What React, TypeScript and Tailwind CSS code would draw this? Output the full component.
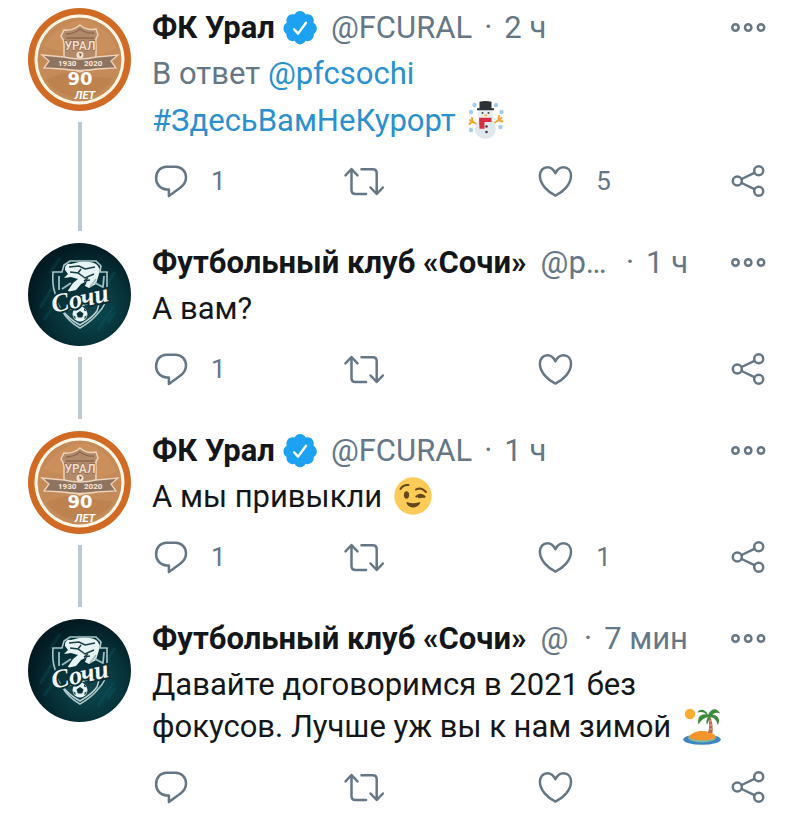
import type { ReactNode } from "react";

type Tweet = {
  id: number;
  club: "ural" | "sochi";
  handle: string;
  handleCut?: boolean;
  time: string;
  replyTo?: string;
  body: ReactNode;
  replies?: number;
  likes?: number;
};

const tweets: Tweet[] = [
  {
    id: 1,
    club: "ural",
    handle: "@FCURAL",
    time: "2 ч",
    replyTo: "@pfcsochi",
    body: (
      <>
        <a href="#hashtag" className="text-[#2a90d0]">
          #ЗдесьВамНеКурорт
        </a>{" "}
        <Snowman />
      </>
    ),
    replies: 1,
    likes: 5,
  },
  { id: 2, club: "sochi", handle: "@p…", handleCut: true, time: "1 ч", body: "А вам?", replies: 1 },
  {
    id: 3,
    club: "ural",
    handle: "@FCURAL",
    time: "1 ч",
    body: (
      <>
        А мы привыкли <Wink />
      </>
    ),
    replies: 1,
    likes: 1,
  },
  {
    id: 4,
    club: "sochi",
    handle: "@",
    handleCut: true,
    time: "7 мин",
    body: (
      <>
        Давайте договоримся в 2021 без фокусов. Лучше уж вы к нам зимой <Island />
      </>
    ),
  },
];

const emojiClass = "ml-1 inline-block size-[38px] align-[-8px]";

function Snowman() {
  return (
    <svg viewBox="-1 0 37 38" className={emojiClass} role="img" aria-label="Снеговик">
      <g fill="#a3cdf0">
        <circle cx="6" cy="4" r="2.2" />
        <circle cx="2.5" cy="11" r="2.2" />
        <circle cx="2.5" cy="29" r="2.2" />
        <circle cx="27.5" cy="4" r="2.2" />
        <circle cx="33" cy="11" r="2.2" />
        <circle cx="32" cy="26" r="2.2" />
      </g>
      <path d="M8 23L1.5 19M4 20.5l-.5-3.5M3.5 20.5L1 23M26.5 21.5L33 17M30 19l.5-4M30 19l4 1.5" stroke="#f4a72f" strokeWidth="2" strokeLinecap="round" fill="none" />
      <circle cx="17" cy="27.5" r="10.5" fill="#e1e8ed" />
      <circle cx="17" cy="13" r="7.5" fill="#e8edf0" />
      <path d="M10.5 16.7h12.5v4.3h-7v6.7h-5z" fill="#d92d45" />
      <path d="M11 .8q6-1.6 12 0v6.4h2.5v2H8.5v-2H11z" fill="#2b3137" />
      <circle cx="14" cy="12" r="1" fill="#3a3f44" />
      <circle cx="20" cy="12" r="1" fill="#3a3f44" />
      <path d="M16 14.3h2.5" stroke="#f4a72f" strokeWidth="1.4" />
      <circle cx="18" cy="25.5" r="1.3" fill="#3a3f44" />
      <circle cx="18" cy="31" r="1.3" fill="#3a3f44" />
    </svg>
  );
}

function Wink() {
  return (
    <svg viewBox="0 0 38 38" className={emojiClass} role="img" aria-label="Подмигивание">
      <circle cx="19" cy="19" r="18.7" fill="#fdcb58" />
      <ellipse cx="12.5" cy="18" rx="2.6" ry="3.7" fill="#65471b" />
      <g fill="none" stroke="#65471b" strokeLinecap="round">
        <path d="M6.5 12q2.5-4.5 8-4M22 12.5q5-3 10 2.5" strokeWidth="2" />
        <path d="M22.5 19.5q4.5-3.5 8.5.5q-3-1-6 .2" strokeWidth="2.2" />
      </g>
      <path d="M13.5 25.2q5.5 2 11.5 0c1.2-.4 1.5.5.8 1.5c-3 5-10.5 5-13 0c-.5-1.1-.3-1.9.7-1.5z" fill="#65471b" />
    </svg>
  );
}

function Island() {
  return (
    <svg viewBox="0 0 38 38" className={emojiClass} role="img" aria-label="Остров">
      <circle cx="7" cy="7" r="5.2" fill="#ffac33" />
      <ellipse cx="19" cy="32.5" rx="18.8" ry="5.3" fill="#3f86c0" />
      <ellipse cx="19" cy="30.8" rx="14" ry="4.7" fill="#77b9a8" />
      <path d="M6 30.5c1-4 7-6.5 13-6.5s13 2 14 6.5c-5 3.8-22 3.8-27 0z" fill="#f4962b" />
      <path d="M24.5 9q3 9 .5 17h4.5Q30.5 17 27 9z" fill="#c1694f" />
      <path d="M26 14h2.5M26.5 18h3M26.5 22h3" stroke="#e6b39c" strokeWidth="1.2" />
      <path d="M25 8C22 1 16 2 14.5 5.5C19 4 22 6 23.5 7.5C17 6.5 14 11 15.5 17.5C18 13 21 11 25 10C23 13 23 16 24 18C25 14 27 12 27.5 10C32 11 34 14 34.5 18C38 13 35 8 29.5 7.5C32 5 35 5.5 37 6.5C35 1 28 0 25 8z" fill="#3e8a3c" />
    </svg>
  );
}

function UralLogo() {
  return (
    <svg viewBox="0 0 103 103" className="size-[103px]" role="img" aria-label="ФК Урал">
      <circle cx="51.5" cy="51.5" r="51.5" fill="#d06a24" />
      <circle cx="51.5" cy="51.5" r="45" fill="#fff6e6" />
      <circle cx="51.5" cy="51.5" r="42" fill="#c48a58" />
      <path d="M15 38q18-25 42-26q20 5 32 28q-15 9-35 7t-39-9z" fill="#d0935d" opacity=".55" />
      <path d="M18 72q20-10 36-6t31 4q-8 14-24 19q-27 3-43-17z" fill="#b87944" opacity=".5" />
      <path d="M36 22q9 1 16-5q7 6 16 4l2 6q-3 4-2 9v11q-1 12-16 17q-15-5-16-17V36q0-4-3-8z" fill="#b28a6a" stroke="#ecd3b9" strokeWidth="1.5" />
      <path d="M38 26q8 0 14-5q7 5 14 4M38 30h28" fill="none" stroke="#8b6850" strokeWidth="1.3" />
      <text x="52" y="42" textAnchor="middle" fontSize="12" stroke="#7b5a45" strokeWidth="1" paintOrder="stroke" className="fill-[#f0dcc5] font-bold">УРАЛ</text>
      <path d="M14 47l22 2q16 4 32 0l22-2l-7 6l5 7l-19 1q-17 3-34 0l-19-1l5-7z" fill="#8f7361" stroke="#ecd3b9" strokeWidth="1.3" />
      <text x="30" y="58" fontSize="8" className="fill-[#fbe8d3] font-bold">1930</text>
      <text x="56" y="58" fontSize="8" className="fill-[#fbe8d3] font-bold">2020</text>
      <circle cx="52" cy="47" r="3.5" fill="#f3e2cd" />
      <path d="M51 45l3 1l-2 3z" fill="#765b48" />
      <text x="52" y="77" textAnchor="middle" fontSize="18" className="fill-white font-['DejaVu_Sans',sans-serif] font-bold">90</text>
      <text x="57" y="91" textAnchor="middle" fontSize="11" className="fill-white font-bold italic">ЛЕТ</text>
    </svg>
  );
}

function SochiLogo() {
  return (
    <svg viewBox="0 0 103 103" className="size-[103px]" role="img" aria-label="ФК Сочи">
      <defs>
        <radialGradient id="sea" cx=".6" cy=".62" r=".6">
          <stop offset="0" stopColor="#0b4e55" />
          <stop offset=".55" stopColor="#07343b" />
          <stop offset="1" stopColor="#031a22" />
        </radialGradient>
      </defs>
      <circle cx="51.5" cy="51.5" r="51.5" fill="url(#sea)" />
      <path d="M12 65l12-20M16 77l10-15M70 87l15-23M79 80l8-11M22 30l10-15M78 43l9-14" stroke="#11656b" strokeWidth="3" opacity=".25" />
      {/* shield */}
      <path d="M28 29h6l2-7l6-4h26l5 5l-1 6h7v22q-1 11-8 18q-7 9-19 16q-12-7-17-16q-7-9-8-19q-3-8-2-21z" fill="#08323a" stroke="#a9c6c9" strokeWidth="1.6" />
      {/* bear */}
      <path d="M37 25q1-5 6-4l8-2q12-1 17 2q5 4 3 10l-3 10l-7 4l-4-2l2-5l-6 3l-5 6l-9 2l6-9l5-4l-7-2l-7 1l4-4l-3-4z" fill="#e8f3f3" />
      <path d="M41 24l10-1l6 3l10-2M42 29l8 1l7 5l9-4M53 26l-3 4M60 35l-4 3l6-1" fill="none" stroke="#163e45" strokeWidth="1.5" />
      <path d="M31 33v14M34 46l9-6M76 33l-1 11l-8-4M62 44l6-8" fill="none" stroke="#9dbfc2" strokeWidth="1.8" />
      {/* lower field with the ball */}
      <path d="M35 68q18-4 38-13l-4 13q-5 7-17 14q-11-6-17-14z" fill="#13434a" stroke="#bcd4d5" strokeWidth="1.5" />
      <circle cx="52" cy="71" r="7.5" fill="#e8f3f3" />
      <path d="M52 68l3.5 2.5l-1.3 4h-4.4L48.5 70.5zM46 66l4-1.5l-1 3zM56 65l3 3.5l-3-1zM45 72.5l2.5 1v3zM59 72.5l-2.5 1v3z" fill="#0b3037" />
      <g transform="rotate(-12 52 56)">
        <text x="52" y="64" textAnchor="middle" fontSize="26" stroke="#0b3037" strokeWidth="4" paintOrder="stroke" className="fill-[#f2f8f8] font-['Liberation_Serif',serif] font-bold italic">
          Сочи
        </text>
      </g>
    </svg>
  );
}

function VerifiedBadge() {
  return (
    <svg viewBox="1.35 1.5 21.15 22" className="ml-2 h-[35px] w-[34px] shrink-0" role="img" aria-label="Подтверждённый аккаунт">
      <path fill="#1da1f2" d="M22.5 12.5c0-1.58-.875-2.95-2.148-3.6.154-.435.238-.905.238-1.4 0-2.21-1.71-3.998-3.818-3.998-.47 0-.92.084-1.336.25C14.818 2.415 13.51 1.5 12 1.5s-2.816.917-3.437 2.25c-.415-.165-.866-.25-1.336-.25-2.11 0-3.818 1.79-3.818 4 0 .494.083.964.237 1.4-1.272.65-2.147 2.018-2.147 3.6 0 1.495.782 2.798 1.942 3.486-.02.17-.032.34-.032.514 0 2.21 1.708 4 3.818 4 .47 0 .92-.086 1.335-.25.62 1.334 1.926 2.25 3.437 2.25 1.512 0 2.818-.916 3.437-2.25.415.163.865.248 1.336.248 2.11 0 3.818-1.79 3.818-4 0-.174-.012-.344-.033-.513 1.158-.687 1.943-1.99 1.943-3.484z" />
      <path d="M8.2 13l2.5 2.7l5-6.8" fill="none" stroke="#fff" strokeWidth="1.5" strokeLinecap="round" strokeLinejoin="round" />
    </svg>
  );
}

function Icon({ children }: { children: ReactNode }) {
  return (
    <svg viewBox="0 0 38 38" className="size-[38px] shrink-0 overflow-visible" fill="none" stroke="currentColor" strokeWidth="2.5" aria-hidden="true">
      {children}
    </svg>
  );
}

const actionClass = "flex items-center gap-[21px] text-[26px] leading-10";

function Actions({ replies, likes }: { replies?: number; likes?: number }) {
  return (
    <div className="mt-[19px] grid h-10 grid-cols-[1fr_1fr_1fr_auto] items-center text-[#657786]">
      <button type="button" aria-label="Ответить" className={actionClass}>
        <Icon>
          <path strokeLinejoin="round" d="M14.5 4.7h9C29.8 4.7 34 9.5 34 15.5c0 5-2.5 8-6.5 10.7L16.9 33.9v-6.4h-2C8.5 27.5 4.1 22.5 4.1 16.3C4.1 9.5 8.5 4.7 14.5 4.7z" />
        </Icon>
        {replies}
      </button>
      <button type="button" aria-label="Ретвитнуть" className={actionClass}>
        <Icon>
          <g strokeLinecap="round" strokeLinejoin="round">
            <path d="M.5 13.3l6-6.3l6 6.3M6.5 7.5V28q0 4 4 4H21" />
            <path d="M16.5 7.3h11.2q4 0 4 4V31.5M25.5 25.5l6.2 6.5l6.2-6.5" />
          </g>
        </Icon>
      </button>
      <button type="button" aria-label="Нравится" className={actionClass}>
        <Icon>
          <path strokeLinejoin="round" d="M18.4 11.2C16.5 7.3 13.8 5.2 10.5 5.2C6 5.2 2.9 8.8 2.9 13.8C2.9 22.5 11 30 18.4 33.6C26 30 34 22.5 34 13.8C34 8.8 31 5.2 26.5 5.2C23 5.2 20.3 7.3 18.4 11.2z" />
        </Icon>
        {likes}
      </button>
      <button type="button" aria-label="Поделиться">
        <Icon>
          <circle cx="7.3" cy="19" r="4.5" />
          <circle cx="28.7" cy="8.7" r="4.5" />
          <circle cx="28.7" cy="29.3" r="4.5" />
          <path d="M11.6 17L24.4 10.8M11.6 21L24.4 27.2" />
        </Icon>
      </button>
    </div>
  );
}

function TweetRow({ tweet, last }: { tweet: Tweet; last: boolean }) {
  const ural = tweet.club === "ural";
  return (
    <article className="flex gap-[21px]">
      <div className="flex w-[103px] shrink-0 flex-col items-center">
        {ural ? <UralLogo /> : <SochiLogo />}
        {!last && <div className="mt-[11px] mb-3 w-1 flex-1 bg-[#bdcad3]" />}
      </div>

      <div className={last ? "min-w-0 flex-1" : "min-w-0 flex-1 pb-[42px]"}>
        <header className="flex items-center">
          <div className="flex min-w-0 flex-1 items-center whitespace-nowrap leading-10 text-[#657786]">
            <h2 className="font-bold text-[#14171a]">{ural ? "ФК Урал" : "Футбольный клуб «Сочи»"}</h2>
            {ural && <VerifiedBadge />}
            <span className={tweet.handleCut ? "ml-[14px] flex-1" : "ml-[14px]"}>{tweet.handle}</span>
            <span className={tweet.handleCut ? "" : "ml-3"}>·</span>
            <time className="ml-3">{tweet.time}</time>
          </div>
          <button type="button" aria-label="Ещё" className="ml-[42px] text-[#657786]">
            <Icon>
              <circle cx="5.5" cy="18.5" r="3.2" />
              <circle cx="18.2" cy="18.5" r="3.2" />
              <circle cx="31" cy="18.5" r="3.2" />
            </Icon>
          </button>
        </header>

        {tweet.replyTo && (
          <p className="mt-[5px] leading-[42px] text-[#657786]">
            В ответ{" "}
            <a href="#profile" className="text-[#2a90d0]">
              {tweet.replyTo}
            </a>
          </p>
        )}
        <p className="mt-[5px] pr-6 leading-[42px]">{tweet.body}</p>
        <Actions replies={tweet.replies} likes={tweet.likes} />
      </div>
    </article>
  );
}

export default function App() {
  return (
    <main className="min-h-screen bg-white py-2 pr-8 pl-7 font-['Roboto',sans-serif] text-[31px] text-[#14171a]">
      {tweets.map((tweet, i) => (
        <TweetRow key={tweet.id} tweet={tweet} last={i === tweets.length - 1} />
      ))}
    </main>
  );
}
